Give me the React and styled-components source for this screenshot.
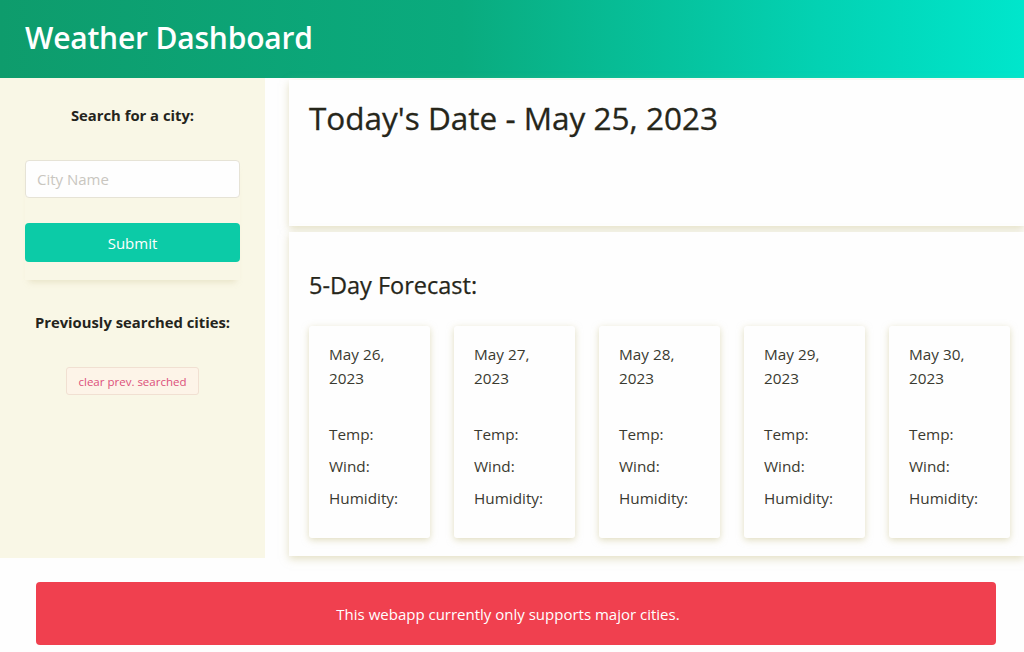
import React from 'react';
import styled, { createGlobalStyle } from 'styled-components';

const GlobalStyle = createGlobalStyle`
  * { box-sizing: border-box; }
  body {
    margin: 0;
    background: #fefefe;
    font-family: "Open Sans", "Noto Sans", sans-serif;
    color: #2b2b22;
  }
`;

const Header = styled.header`
  height: 78px;
  display: flex;
  align-items: center;
  padding: 0 0 3px 25px;
  background: linear-gradient(90deg, #0e9c6c 0%, #0aab7e 45%, #03d2b3 80%, #00e6cc 100%);
  h1 {
    margin: 0;
    color: #fff;
    font-size: 30px;
    font-weight: 600;
    letter-spacing: -0.2px;
  }
`;

const Layout = styled.div`
  display: flex;
  align-items: flex-start;
`;

const Sidebar = styled.aside`
  width: 265px;
  height: 480px;
  flex-shrink: 0;
  background: #f9f7e6;
  padding: 26px 25px 0;
  display: flex;
  flex-direction: column;
  align-items: center;
`;

const SideTitle = styled.h4`
  margin: 0;
  font-size: 14.8px;
  font-weight: 700;
  color: #24241c;
  text-align: center;
  line-height: 22px;
`;

const SearchForm = styled.form`
  width: 100%;
  display: flex;
  flex-direction: column;
  gap: 25px;
  margin-top: 34px;
  padding-bottom: 18px;
  box-shadow: 0 6px 6px -4px rgba(200, 190, 140, 0.35);
`;

const Input = styled.input`
  width: 100%;
  height: 38px;
  border: 1px solid #e6e3d6;
  border-radius: 4px;
  background: #fefefe;
  padding: 0 11px;
  font-family: inherit;
  font-size: 15px;
  &::placeholder { color: #c9c6c0; }
`;

const SubmitButton = styled.button`
  width: 100%;
  height: 39px;
  border: none;
  border-radius: 4px;
  background: #0ccba7;
  color: #fff;
  font-family: inherit;
  font-size: 15px;
`;

const HistoryTitle = styled(SideTitle)`
  margin-top: 31px;
`;

const ClearButton = styled.button`
  margin-top: 34px;
  height: 28px;
  padding: 0 12px;
  border: 1px solid #f1e0d2;
  border-radius: 3px;
  background: #fdf4e8;
  color: #dc4f7a;
  font-family: inherit;
  font-size: 11.5px;
`;

const Main = styled.main`
  flex: 1;
  min-width: 0;
  padding: 2px 0 0 24px;
  display: flex;
  flex-direction: column;
  gap: 6px;
`;

const Panel = styled.section`
  background: #fefefe;
  box-shadow: 0 3px 8px rgba(205, 198, 150, 0.55);
  padding: ${p => p.$pad};
  height: ${p => p.$h}px;
`;

const TodayTitle = styled.h2`
  margin: 0;
  font-size: 31.5px;
  font-weight: 500;
  color: #26261a;
  line-height: 40px;
  -webkit-text-stroke: 0.3px #26261a;
`;

const ForecastTitle = styled.h3`
  margin: 0 0 25px;
  font-size: 23.5px;
  font-weight: 500;
  color: #26261a;
  line-height: 32px;
  -webkit-text-stroke: 0.25px #26261a;
`;

const CardRow = styled.div`
  display: flex;
  gap: 24px;
`;

const Card = styled.div`
  width: 121px;
  height: 212px;
  flex-shrink: 0;
  padding: 16px 20px 0;
  background: #fefefe;
  box-shadow: 0 2px 7px rgba(205, 198, 150, 0.6);
  border-radius: 3px;
  font-size: 15.3px;
  font-weight: 500;
  line-height: 24px;
  color: #3a3a30;
  p { margin: 0 0 8px; }
  p:first-child { margin-bottom: 32px; }
`;

const Alert = styled.div`
  margin: 24px 28px 0 36px;
  height: 63px;
  padding-right: 16px;
  border-radius: 4px;
  background: #f0404f;
  color: #fff;
  font-size: 15px;
  display: flex;
  align-items: center;
  justify-content: center;
`;

const days = ['May 26,', 'May 27,', 'May 28,', 'May 29,', 'May 30,'];

export default function App() {
  return (
    <>
      <GlobalStyle />
      <Header>
        <h1>Weather Dashboard</h1>
      </Header>
      <Layout>
        <Sidebar>
          <SideTitle>Search for a city:</SideTitle>
          <SearchForm onSubmit={e => e.preventDefault()}>
            <Input placeholder="City Name" />
            <SubmitButton type="submit">Submit</SubmitButton>
          </SearchForm>
          <HistoryTitle>Previously searched cities:</HistoryTitle>
          <ClearButton>clear prev. searched</ClearButton>
        </Sidebar>
        <Main>
          <Panel $pad="18px 20px" $h={146}>
            <TodayTitle>Today's Date - May 25, 2023</TodayTitle>
          </Panel>
          <Panel $pad="37px 20px 0" $h={324}>
            <ForecastTitle>5-Day Forecast:</ForecastTitle>
            <CardRow>
              {days.map(d => (
                <Card key={d}>
                  <p>{d}<br />2023</p>
                  <p>Temp:</p>
                  <p>Wind:</p>
                  <p>Humidity:</p>
                </Card>
              ))}
            </CardRow>
          </Panel>
        </Main>
      </Layout>
      <Alert>This webapp currently only supports major cities.</Alert>
    </>
  );
}
